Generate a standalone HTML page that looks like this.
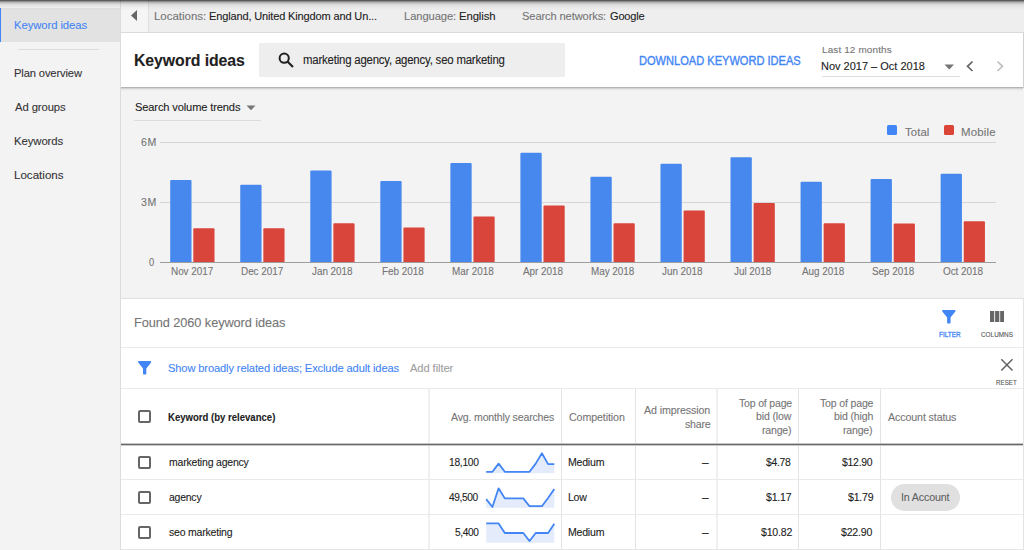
<!DOCTYPE html>
<html><head><meta charset="utf-8"><style>
html,body{margin:0;padding:0;width:1024px;height:550px;overflow:hidden;background:#f2f2f2;font-family:"Liberation Sans", sans-serif;}
.t{position:absolute;white-space:nowrap;line-height:1;font-family:"Liberation Sans", sans-serif;-webkit-text-stroke:0.1px currentColor;}
</style></head><body>
<div style="position:absolute;left:0px;top:0px;width:120px;height:550px;background:#f3f3f3;"></div>
<div style="position:absolute;left:120px;top:0px;width:1px;height:550px;background:#dcdcdc;"></div>
<div style="position:absolute;left:121px;top:0px;width:903px;height:32px;background:#eeeeee;"></div>
<div style="position:absolute;left:121px;top:0px;width:27px;height:32px;background:#f5f5f5;"></div>
<div style="position:absolute;left:148px;top:0px;width:1px;height:32px;background:#dedede;"></div>
<div style="position:absolute;left:121px;top:32px;width:903px;height:1px;background:#dadada;"></div>
<div style="position:absolute;left:121px;top:88px;width:903px;height:210px;background:#f3f3f3;"></div>
<div style="position:absolute;left:121px;top:33px;width:902px;height:54px;background:#ffffff;"></div>
<div style="position:absolute;left:121px;top:87px;width:902px;height:1px;background:#b4b4b4;"></div>
<div style="position:absolute;left:121px;top:88px;width:902px;height:1px;background:#d4d4d4;"></div>
<div style="position:absolute;left:121px;top:89px;width:902px;height:1px;background:#e6e6e6;"></div>
<div style="position:absolute;left:121px;top:90px;width:902px;height:1px;background:#efefef;"></div>
<div style="position:absolute;left:1023px;top:33px;width:1px;height:55px;background:#d0d0d0;"></div>
<div style="position:absolute;left:121px;top:298px;width:902px;height:1px;background:#e0e0e0;"></div>
<div style="position:absolute;left:121px;top:299px;width:902px;height:250px;background:#ffffff;"></div>
<div style="position:absolute;left:1023px;top:298px;width:1px;height:252px;background:#e4e4e4;"></div>
<div style="position:absolute;left:121px;top:549px;width:903px;height:1px;background:#e6e6e6;"></div>
<div style="position:absolute;left:0px;top:8px;width:120px;height:34px;background:#e2e2e2;"></div>
<div style="position:absolute;left:0px;top:8px;width:1px;height:34px;background:#4285f4;"></div>
<div class="t" style="left:13.62px;top:20px;font-size:11.5px;color:#4285f4;font-weight:400;letter-spacing:-0.078px;transform:scaleX(0.9814);transform-origin:0 0;">Keyword ideas</div>
<div style="position:absolute;left:18px;top:49px;width:81px;height:1px;background:#dcdcdc;"></div>
<div class="t" style="left:13.53px;top:68px;font-size:11.5px;color:#333333;font-weight:400;letter-spacing:-0.124px;transform:scaleX(0.9696);transform-origin:0 0;">Plan overview</div>
<div class="t" style="left:14.50px;top:102px;font-size:11.5px;color:#333333;font-weight:400;letter-spacing:-0.092px;transform:scaleX(0.9792);transform-origin:0 0;">Ad groups</div>
<div class="t" style="left:13.52px;top:136px;font-size:11.5px;color:#333333;font-weight:400;letter-spacing:-0.075px;transform:scaleX(0.9841);transform-origin:0 0;">Keywords</div>
<div class="t" style="left:13.50px;top:170px;font-size:11.5px;color:#333333;font-weight:400;letter-spacing:0.015px;transform:scaleX(1.0037);transform-origin:0 0;">Locations</div>
<svg style="position:absolute;left:130px;top:10px" width="8" height="12"><path d="M7 0 L1 5.5 L7 11 Z" fill="#666"/></svg>
<div class="t" style="left:153.90px;top:11px;font-size:11.5px;color:#757575;font-weight:400;letter-spacing:-0.009px;transform:scaleX(0.9976);transform-origin:0 0;">Locations:</div>
<div class="t" style="left:208.84px;top:11px;font-size:11.5px;color:#212121;font-weight:400;letter-spacing:-0.159px;transform:scaleX(0.9591);transform-origin:0 0;">England, United Kingdom and Un...</div>
<div class="t" style="left:404.42px;top:11px;font-size:11.5px;color:#757575;font-weight:400;letter-spacing:-0.113px;transform:scaleX(0.9751);transform-origin:0 0;">Language:</div>
<div class="t" style="left:459.32px;top:11px;font-size:11.5px;color:#212121;font-weight:400;letter-spacing:-0.075px;transform:scaleX(0.9817);transform-origin:0 0;">English</div>
<div class="t" style="left:521.60px;top:11px;font-size:11.5px;color:#757575;font-weight:400;letter-spacing:-0.127px;transform:scaleX(0.9686);transform-origin:0 0;">Search networks:</div>
<div class="t" style="left:609.50px;top:11px;font-size:11.5px;color:#212121;font-weight:400;letter-spacing:-0.200px;transform:scaleX(0.9611);transform-origin:0 0;">Google</div>
<div class="t" style="left:134.01px;top:53px;font-size:16px;color:#212121;font-weight:700;letter-spacing:-0.071px;transform:scaleX(0.9888);transform-origin:0 0;">Keyword ideas</div>
<div style="position:absolute;left:259px;top:43px;width:306px;height:34px;background:#eeeeee;"></div>
<svg style="position:absolute;left:276px;top:50px" width="20" height="20"><circle cx="8.2" cy="8.2" r="4.6" stroke="#212121" stroke-width="2" fill="none"/><path d="M11.5 11.5 L17 17" stroke="#212121" stroke-width="2.2"/></svg>
<div class="t" style="left:302.75px;top:54px;font-size:12px;color:#212121;font-weight:400;letter-spacing:-0.204px;transform:scaleX(0.9496);transform-origin:0 0;">marketing agency, agency, seo marketing</div>
<div class="t" style="left:638.88px;top:55px;font-size:12px;color:#4285f4;font-weight:400;letter-spacing:0.000px;transform:scaleX(0.9224);transform-origin:0 0;-webkit-text-stroke:0.35px #4285f4;">DOWNLOAD KEYWORD IDEAS</div>
<div class="t" style="left:821.80px;top:45px;font-size:9.5px;color:#757575;font-weight:400;letter-spacing:0.139px;transform:scaleX(1.0434);transform-origin:0 0;">Last 12 months</div>
<div class="t" style="left:820.80px;top:61px;font-size:11px;color:#212121;font-weight:400;letter-spacing:-0.002px;transform:scaleX(0.9994);transform-origin:0 0;">Nov 2017 – Oct 2018</div>
<svg style="position:absolute;left:944px;top:64px" width="12" height="7"><path d="M0.5 0.5 L10 0.5 L5.25 5.5 Z" fill="#757575"/></svg>
<div style="position:absolute;left:822px;top:76px;width:138px;height:1px;background:#dddddd;"></div>
<svg style="position:absolute;left:964px;top:60px" width="12" height="12"><path d="M8.5 1.5 L3.5 6.3 L8.5 11" stroke="#616161" stroke-width="1.6" fill="none"/></svg>
<svg style="position:absolute;left:994px;top:60px" width="12" height="12"><path d="M3.5 1.5 L8.5 6.3 L3.5 11" stroke="#bdbdbd" stroke-width="1.6" fill="none"/></svg>
<div class="t" style="left:134.60px;top:102px;font-size:11.5px;color:#212121;font-weight:400;letter-spacing:-0.140px;transform:scaleX(0.9657);transform-origin:0 0;">Search volume trends</div>
<svg style="position:absolute;left:246px;top:105px" width="11" height="6"><path d="M0.5 0.5 L9.5 0.5 L5 5.2 Z" fill="#757575"/></svg>
<div style="position:absolute;left:134px;top:120px;width:127px;height:1px;background:#dcdcdc;"></div>
<div style="position:absolute;left:160px;top:142px;width:836px;height:1px;background:#d6d6d6;"></div>
<div style="position:absolute;left:160px;top:202px;width:836px;height:1px;background:#d6d6d6;"></div>
<div class="t" style="left:140.50px;top:138px;font-size:10px;color:#757575;font-weight:400;letter-spacing:0.491px;transform:scaleX(1.0600);transform-origin:0 0;">6M</div>
<div class="t" style="left:140.50px;top:198px;font-size:10px;color:#757575;font-weight:400;letter-spacing:0.491px;transform:scaleX(1.0600);transform-origin:0 0;">3M</div>
<div class="t" style="left:149.20px;top:258px;font-size:10px;color:#757575;font-weight:400;letter-spacing:0.000px;transform:scaleX(0.9300);transform-origin:0 0;">0</div>
<svg style="position:absolute;left:0;top:0" width="1024" height="300"><rect x="170.20" y="180.0" width="21.3" height="83.0" rx="1" fill="#4688ee"/><rect x="193.30" y="228.3" width="21.2" height="34.7" rx="1" fill="#d9453b"/><rect x="240.24" y="184.7" width="21.3" height="78.3" rx="1" fill="#4688ee"/><rect x="263.34" y="228.3" width="21.2" height="34.7" rx="1" fill="#d9453b"/><rect x="310.28" y="170.5" width="21.3" height="92.5" rx="1" fill="#4688ee"/><rect x="333.38" y="223.3" width="21.2" height="39.7" rx="1" fill="#d9453b"/><rect x="380.32" y="180.9" width="21.3" height="82.1" rx="1" fill="#4688ee"/><rect x="403.42" y="227.6" width="21.2" height="35.4" rx="1" fill="#d9453b"/><rect x="450.36" y="163.1" width="21.3" height="99.9" rx="1" fill="#4688ee"/><rect x="473.46" y="216.5" width="21.2" height="46.5" rx="1" fill="#d9453b"/><rect x="520.40" y="152.7" width="21.3" height="110.3" rx="1" fill="#4688ee"/><rect x="543.50" y="205.5" width="21.2" height="57.5" rx="1" fill="#d9453b"/><rect x="590.44" y="176.7" width="21.3" height="86.3" rx="1" fill="#4688ee"/><rect x="613.54" y="223.3" width="21.2" height="39.7" rx="1" fill="#d9453b"/><rect x="660.48" y="163.8" width="21.3" height="99.2" rx="1" fill="#4688ee"/><rect x="683.58" y="210.5" width="21.2" height="52.5" rx="1" fill="#d9453b"/><rect x="730.52" y="157.3" width="21.3" height="105.7" rx="1" fill="#4688ee"/><rect x="753.62" y="203.1" width="21.2" height="59.9" rx="1" fill="#d9453b"/><rect x="800.56" y="181.8" width="21.3" height="81.2" rx="1" fill="#4688ee"/><rect x="823.66" y="223.3" width="21.2" height="39.7" rx="1" fill="#d9453b"/><rect x="870.60" y="179.0" width="21.3" height="84.0" rx="1" fill="#4688ee"/><rect x="893.70" y="223.5" width="21.2" height="39.5" rx="1" fill="#d9453b"/><rect x="940.64" y="173.8" width="21.3" height="89.2" rx="1" fill="#4688ee"/><rect x="963.74" y="221.3" width="21.2" height="41.7" rx="1" fill="#d9453b"/></svg>
<div style="position:absolute;left:160px;top:262px;width:836px;height:1px;background:#9e9e9e;"></div>
<div class="t" style="left:171.00px;top:267px;font-size:10px;color:#757575;font-weight:400;letter-spacing:-0.034px;transform:scaleX(0.9916);transform-origin:0 0;">Nov 2017</div>
<div class="t" style="left:241.00px;top:267px;font-size:10px;color:#757575;font-weight:400;letter-spacing:-0.034px;transform:scaleX(0.9916);transform-origin:0 0;">Dec 2017</div>
<div class="t" style="left:312.49px;top:267px;font-size:10px;color:#757575;font-weight:400;letter-spacing:-0.033px;transform:scaleX(0.9916);transform-origin:0 0;">Jan 2018</div>
<div class="t" style="left:381.50px;top:267px;font-size:10px;color:#757575;font-weight:400;letter-spacing:-0.033px;transform:scaleX(0.9916);transform-origin:0 0;">Feb 2018</div>
<div class="t" style="left:451.50px;top:267px;font-size:10px;color:#757575;font-weight:400;letter-spacing:-0.033px;transform:scaleX(0.9916);transform-origin:0 0;">Mar 2018</div>
<div class="t" style="left:522.98px;top:267px;font-size:10px;color:#757575;font-weight:400;letter-spacing:-0.032px;transform:scaleX(0.9916);transform-origin:0 0;">Apr 2018</div>
<div class="t" style="left:590.51px;top:267px;font-size:10px;color:#757575;font-weight:400;letter-spacing:-0.035px;transform:scaleX(0.9916);transform-origin:0 0;">May 2018</div>
<div class="t" style="left:662.49px;top:267px;font-size:10px;color:#757575;font-weight:400;letter-spacing:-0.033px;transform:scaleX(0.9916);transform-origin:0 0;">Jun 2018</div>
<div class="t" style="left:733.97px;top:267px;font-size:10px;color:#757575;font-weight:400;letter-spacing:-0.031px;transform:scaleX(0.9916);transform-origin:0 0;">Jul 2018</div>
<div class="t" style="left:801.50px;top:267px;font-size:10px;color:#757575;font-weight:400;letter-spacing:-0.035px;transform:scaleX(0.9916);transform-origin:0 0;">Aug 2018</div>
<div class="t" style="left:871.50px;top:267px;font-size:10px;color:#757575;font-weight:400;letter-spacing:-0.035px;transform:scaleX(0.9916);transform-origin:0 0;">Sep 2018</div>
<div class="t" style="left:942.98px;top:267px;font-size:10px;color:#757575;font-weight:400;letter-spacing:-0.032px;transform:scaleX(0.9916);transform-origin:0 0;">Oct 2018</div>
<div style="position:absolute;left:887px;top:125px;width:10px;height:10px;background:#4285f4;border-radius:1.5px;"></div>
<div class="t" style="left:904.90px;top:127px;font-size:11px;color:#757575;font-weight:400;letter-spacing:0.107px;transform:scaleX(1.0287);transform-origin:0 0;">Total</div>
<div style="position:absolute;left:944px;top:125px;width:10px;height:10px;background:#db4437;border-radius:1.5px;"></div>
<div class="t" style="left:960.66px;top:127px;font-size:11px;color:#757575;font-weight:400;letter-spacing:0.161px;transform:scaleX(1.0406);transform-origin:0 0;">Mobile</div>
<div class="t" style="left:133.82px;top:316px;font-size:13px;color:#757575;font-weight:400;letter-spacing:-0.081px;transform:scaleX(0.9822);transform-origin:0 0;">Found 2060 keyword ideas</div>
<svg style="position:absolute;left:942.4px;top:310px" width="13.7" height="13.6" viewBox="4 4 16 16" preserveAspectRatio="none"><path d="M4.25 5.61C6.27 8.2 10 13 10 13v6c0 .55.45 1 1 1h2c.55 0 1-.45 1-1v-6s3.72-4.8 5.74-7.39A.998.998 0 0 0 18.95 4H5.04c-.83 0-1.3.95-.79 1.61z" fill="#4285f4"/></svg>
<div class="t" style="left:938.80px;top:331px;font-size:7px;color:#4285f4;font-weight:400;letter-spacing:0.000px;transform:scaleX(0.9130);transform-origin:0 0;-webkit-text-stroke:0.3px #4285f4;">FILTER</div>
<svg style="position:absolute;left:990.1px;top:311px" width="14.4" height="10.9" viewBox="4 5 17 13" preserveAspectRatio="none"><path d="M10 18h5V5h-5v13zm-6 0h5V5H4v13zM16 5v13h5V5h-5z" fill="#666"/></svg>
<div class="t" style="left:981.00px;top:331px;font-size:7px;color:#555555;font-weight:400;letter-spacing:0.000px;transform:scaleX(0.9143);transform-origin:0 0;">COLUMNS</div>
<div style="position:absolute;left:121px;top:347px;width:902px;height:1px;background:#eaeaea;"></div>
<svg style="position:absolute;left:137.9px;top:361px" width="13.3" height="13.6" viewBox="4 4 16 16" preserveAspectRatio="none"><path d="M4.25 5.61C6.27 8.2 10 13 10 13v6c0 .55.45 1 1 1h2c.55 0 1-.45 1-1v-6s3.72-4.8 5.74-7.39A.998.998 0 0 0 18.95 4H5.04c-.83 0-1.3.95-.79 1.61z" fill="#4285f4"/></svg>
<div class="t" style="left:168.40px;top:363px;font-size:11.5px;color:#4285f4;font-weight:400;letter-spacing:-0.124px;transform:scaleX(0.9662);transform-origin:0 0;">Show broadly related ideas; Exclude adult ideas</div>
<div class="t" style="left:410.40px;top:363px;font-size:11.5px;color:#9e9e9e;font-weight:400;letter-spacing:-0.096px;transform:scaleX(0.9720);transform-origin:0 0;">Add filter</div>
<svg style="position:absolute;left:999.5px;top:357.5px" width="14" height="14"><path d="M1.3 1.3 L12.5 12.5 M12.5 1.3 L1.3 12.5" stroke="#616161" stroke-width="1.45"/></svg>
<div class="t" style="left:996.10px;top:379px;font-size:7px;color:#555555;font-weight:400;letter-spacing:0.000px;transform:scaleX(0.8870);transform-origin:0 0;">RESET</div>
<div style="position:absolute;left:121px;top:388px;width:902px;height:1px;background:#eaeaea;"></div>
<div style="position:absolute;left:561px;top:389px;width:1px;height:160px;background:#e4e4e4;"></div>
<div style="position:absolute;left:635px;top:389px;width:1px;height:160px;background:#e4e4e4;"></div>
<div style="position:absolute;left:798px;top:389px;width:1px;height:160px;background:#e4e4e4;"></div>
<div style="position:absolute;left:880px;top:389px;width:1px;height:160px;background:#e4e4e4;"></div>
<div style="position:absolute;left:428px;top:389px;width:1px;height:160px;background:#efefef;"></div>
<div style="position:absolute;left:429px;top:389px;width:1px;height:160px;background:#efefef;"></div>
<div style="position:absolute;left:716px;top:389px;width:1px;height:160px;background:#efefef;"></div>
<div style="position:absolute;left:717px;top:389px;width:1px;height:160px;background:#efefef;"></div>
<div style="position:absolute;left:121px;top:443px;width:902px;height:1px;background:#c4c4c4;"></div>
<div style="position:absolute;left:121px;top:444px;width:902px;height:1px;background:#6a6a6a;"></div>
<div style="position:absolute;left:121px;top:445px;width:902px;height:1px;background:#c8c8c8;"></div>
<div style="position:absolute;left:138px;top:410px;width:9px;height:9px;border:2px solid #666;border-radius:2px"></div>
<div class="t" style="left:168.40px;top:412px;font-size:11px;color:#212121;font-weight:700;letter-spacing:0.000px;transform:scaleX(0.8691);transform-origin:0 0;">Keyword (by relevance)</div>
<div class="t" style="left:451.10px;top:412px;font-size:11px;color:#757575;font-weight:400;letter-spacing:-0.163px;transform:scaleX(0.9578);transform-origin:0 0;">Avg. monthly searches</div>
<div class="t" style="left:568.90px;top:412px;font-size:11px;color:#757575;font-weight:400;letter-spacing:-0.115px;transform:scaleX(0.9710);transform-origin:0 0;">Competition</div>
<div class="t" style="left:644.00px;top:405px;font-size:11px;color:#757575;font-weight:400;letter-spacing:-0.120px;transform:scaleX(0.9696);transform-origin:0 0;">Ad impression</div>
<div class="t" style="left:684.66px;top:419px;font-size:11px;color:#757575;font-weight:400;letter-spacing:-0.205px;transform:scaleX(0.9580);transform-origin:0 0;">share</div>
<div class="t" style="left:738.60px;top:398px;font-size:11px;color:#757575;font-weight:400;letter-spacing:-0.180px;transform:scaleX(0.9547);transform-origin:0 0;">Top of page</div>
<div class="t" style="left:755.96px;top:411px;font-size:11px;color:#757575;font-weight:400;letter-spacing:-0.159px;transform:scaleX(0.9580);transform-origin:0 0;">bid (low</div>
<div class="t" style="left:761.54px;top:425px;font-size:11px;color:#757575;font-weight:400;letter-spacing:-0.187px;transform:scaleX(0.9580);transform-origin:0 0;">range)</div>
<div class="t" style="left:819.89px;top:398px;font-size:11px;color:#757575;font-weight:400;letter-spacing:-0.167px;transform:scaleX(0.9580);transform-origin:0 0;">Top of page</div>
<div class="t" style="left:833.84px;top:411px;font-size:11px;color:#757575;font-weight:400;letter-spacing:-0.153px;transform:scaleX(0.9580);transform-origin:0 0;">bid (high</div>
<div class="t" style="left:843.14px;top:425px;font-size:11px;color:#757575;font-weight:400;letter-spacing:-0.187px;transform:scaleX(0.9580);transform-origin:0 0;">range)</div>
<div class="t" style="left:887.80px;top:412px;font-size:11px;color:#757575;font-weight:400;letter-spacing:-0.117px;transform:scaleX(0.9692);transform-origin:0 0;">Account status</div>
<div style="position:absolute;left:121px;top:479px;width:902px;height:1px;background:#eaeaea;"></div>
<div style="position:absolute;left:121px;top:514px;width:902px;height:1px;background:#eaeaea;"></div>
<div style="position:absolute;left:138px;top:456px;width:9px;height:9px;border:2px solid #666;border-radius:2px"></div>
<div class="t" style="left:168.60px;top:457px;font-size:11px;color:#212121;font-weight:400;letter-spacing:-0.196px;transform:scaleX(0.9517);transform-origin:0 0;">marketing agency</div>
<div class="t" style="left:448.77px;top:457px;font-size:11px;color:#212121;font-weight:400;letter-spacing:-0.317px;transform:scaleX(0.9327);transform-origin:0 0;">18,100</div>
<div class="t" style="left:567.94px;top:457px;font-size:11px;color:#212121;font-weight:400;letter-spacing:-0.222px;transform:scaleX(0.9580);transform-origin:0 0;">Medium</div>
<div class="t" style="left:702.40px;top:457px;font-size:11px;color:#212121;font-weight:400;letter-spacing:0.000px;transform:scaleX(1.0800);transform-origin:0 0;">–</div>
<div class="t" style="left:766.00px;top:457px;font-size:11px;color:#212121;font-weight:400;letter-spacing:-0.287px;transform:scaleX(0.9421);transform-origin:0 0;">$4.78</div>
<div class="t" style="left:841.90px;top:457px;font-size:11px;color:#212121;font-weight:400;letter-spacing:-0.253px;transform:scaleX(0.9471);transform-origin:0 0;">$12.90</div>
<div style="position:absolute;left:138px;top:491px;width:9px;height:9px;border:2px solid #666;border-radius:2px"></div>
<div class="t" style="left:168.60px;top:492px;font-size:11px;color:#212121;font-weight:400;letter-spacing:-0.242px;transform:scaleX(0.9520);transform-origin:0 0;">agency</div>
<div class="t" style="left:449.42px;top:492px;font-size:11px;color:#212121;font-weight:400;letter-spacing:-0.384px;transform:scaleX(0.9220);transform-origin:0 0;">49,500</div>
<div class="t" style="left:567.94px;top:492px;font-size:11px;color:#212121;font-weight:400;letter-spacing:-0.278px;transform:scaleX(0.9580);transform-origin:0 0;">Low</div>
<div class="t" style="left:702.40px;top:492px;font-size:11px;color:#212121;font-weight:400;letter-spacing:0.000px;transform:scaleX(1.0800);transform-origin:0 0;">–</div>
<div class="t" style="left:766.19px;top:492px;font-size:11px;color:#212121;font-weight:400;letter-spacing:-0.197px;transform:scaleX(0.9580);transform-origin:0 0;">$1.17</div>
<div class="t" style="left:847.79px;top:492px;font-size:11px;color:#212121;font-weight:400;letter-spacing:-0.197px;transform:scaleX(0.9580);transform-origin:0 0;">$1.79</div>
<div style="position:absolute;left:138px;top:526px;width:9px;height:9px;border:2px solid #666;border-radius:2px"></div>
<div class="t" style="left:168.60px;top:527px;font-size:11px;color:#212121;font-weight:400;letter-spacing:-0.193px;transform:scaleX(0.9520);transform-origin:0 0;">seo marketing</div>
<div class="t" style="left:454.64px;top:527px;font-size:11px;color:#212121;font-weight:400;letter-spacing:-0.395px;transform:scaleX(0.9220);transform-origin:0 0;">5,400</div>
<div class="t" style="left:567.94px;top:527px;font-size:11px;color:#212121;font-weight:400;letter-spacing:-0.222px;transform:scaleX(0.9580);transform-origin:0 0;">Medium</div>
<div class="t" style="left:702.40px;top:527px;font-size:11px;color:#212121;font-weight:400;letter-spacing:0.000px;transform:scaleX(1.0800);transform-origin:0 0;">–</div>
<div class="t" style="left:760.61px;top:527px;font-size:11px;color:#212121;font-weight:400;letter-spacing:-0.193px;transform:scaleX(0.9580);transform-origin:0 0;">$10.82</div>
<div class="t" style="left:841.28px;top:527px;font-size:11px;color:#212121;font-weight:400;letter-spacing:-0.199px;transform:scaleX(0.9580);transform-origin:0 0;">$22.90</div>
<svg style="position:absolute;left:0;top:0" width="1024" height="550"><polygon points="486.2,473.3 486.2,471.8 492.4,471.8 498.6,463.6 504.8,471.8 511.0,471.8 517.1,471.8 523.3,471.8 529.5,471.8 535.7,463.6 541.9,453.3 548.1,464.1 554.3,464.1 554.3,473.3" fill="#e4ecfb"/><polyline points="486.2,471.8 492.4,471.8 498.6,463.6 504.8,471.8 511.0,471.8 517.1,471.8 523.3,471.8 529.5,471.8 535.7,463.6 541.9,453.3 548.1,464.1 554.3,464.1" fill="none" stroke="#4285f4" stroke-width="1.8" stroke-linejoin="round"/><polygon points="486.2,507.7 486.2,499.1 492.4,507.0 498.6,488.3 504.8,498.4 511.0,498.4 517.1,498.4 523.3,498.4 529.5,506.2 535.7,506.2 541.9,506.2 548.1,498.0 554.3,489.0 554.3,507.7" fill="#e4ecfb"/><polyline points="486.2,499.1 492.4,507.0 498.6,488.3 504.8,498.4 511.0,498.4 517.1,498.4 523.3,498.4 529.5,506.2 535.7,506.2 541.9,506.2 548.1,498.0 554.3,489.0" fill="none" stroke="#4285f4" stroke-width="1.8" stroke-linejoin="round"/><polygon points="486.2,542.7 486.2,523.4 492.4,523.4 498.6,523.4 504.8,533.0 511.0,533.0 517.1,533.0 523.3,533.0 529.5,541.0 535.7,533.0 541.9,533.0 548.1,533.0 554.3,523.8 554.3,542.7" fill="#e4ecfb"/><polyline points="486.2,523.4 492.4,523.4 498.6,523.4 504.8,533.0 511.0,533.0 517.1,533.0 523.3,533.0 529.5,541.0 535.7,533.0 541.9,533.0 548.1,533.0 554.3,523.8" fill="none" stroke="#4285f4" stroke-width="1.8" stroke-linejoin="round"/></svg>
<div style="position:absolute;left:891px;top:484px;width:69px;height:27px;border-radius:14px;background:#e0e0e0"></div>
<div class="t" style="left:900.63px;top:492px;font-size:11px;color:#616161;font-weight:400;letter-spacing:-0.133px;transform:scaleX(0.9659);transform-origin:0 0;">In Account</div>
<div style="position:absolute;left:0px;top:0px;width:1024px;height:1px;background:rgba(0,0,0,0.62);"></div>
<div style="position:absolute;left:0px;top:1px;width:1024px;height:1px;background:rgba(0,0,0,0.42);"></div>
<div style="position:absolute;left:0px;top:2px;width:1024px;height:1px;background:rgba(0,0,0,0.24);"></div>
<div style="position:absolute;left:0px;top:3px;width:1024px;height:1px;background:rgba(0,0,0,0.16);"></div>
<div style="position:absolute;left:0px;top:4px;width:1024px;height:1px;background:rgba(0,0,0,0.092);"></div>
<div style="position:absolute;left:0px;top:5px;width:1024px;height:1px;background:rgba(0,0,0,0.059);"></div>
<div style="position:absolute;left:0px;top:6px;width:1024px;height:1px;background:rgba(0,0,0,0.038);"></div>
<div style="position:absolute;left:0px;top:7px;width:1024px;height:1px;background:rgba(0,0,0,0.025);"></div>
<div style="position:absolute;left:0px;top:8px;width:1024px;height:1px;background:rgba(0,0,0,0.017);"></div>
<div style="position:absolute;left:0px;top:9px;width:1024px;height:1px;background:rgba(0,0,0,0.008);"></div>
</body></html>
